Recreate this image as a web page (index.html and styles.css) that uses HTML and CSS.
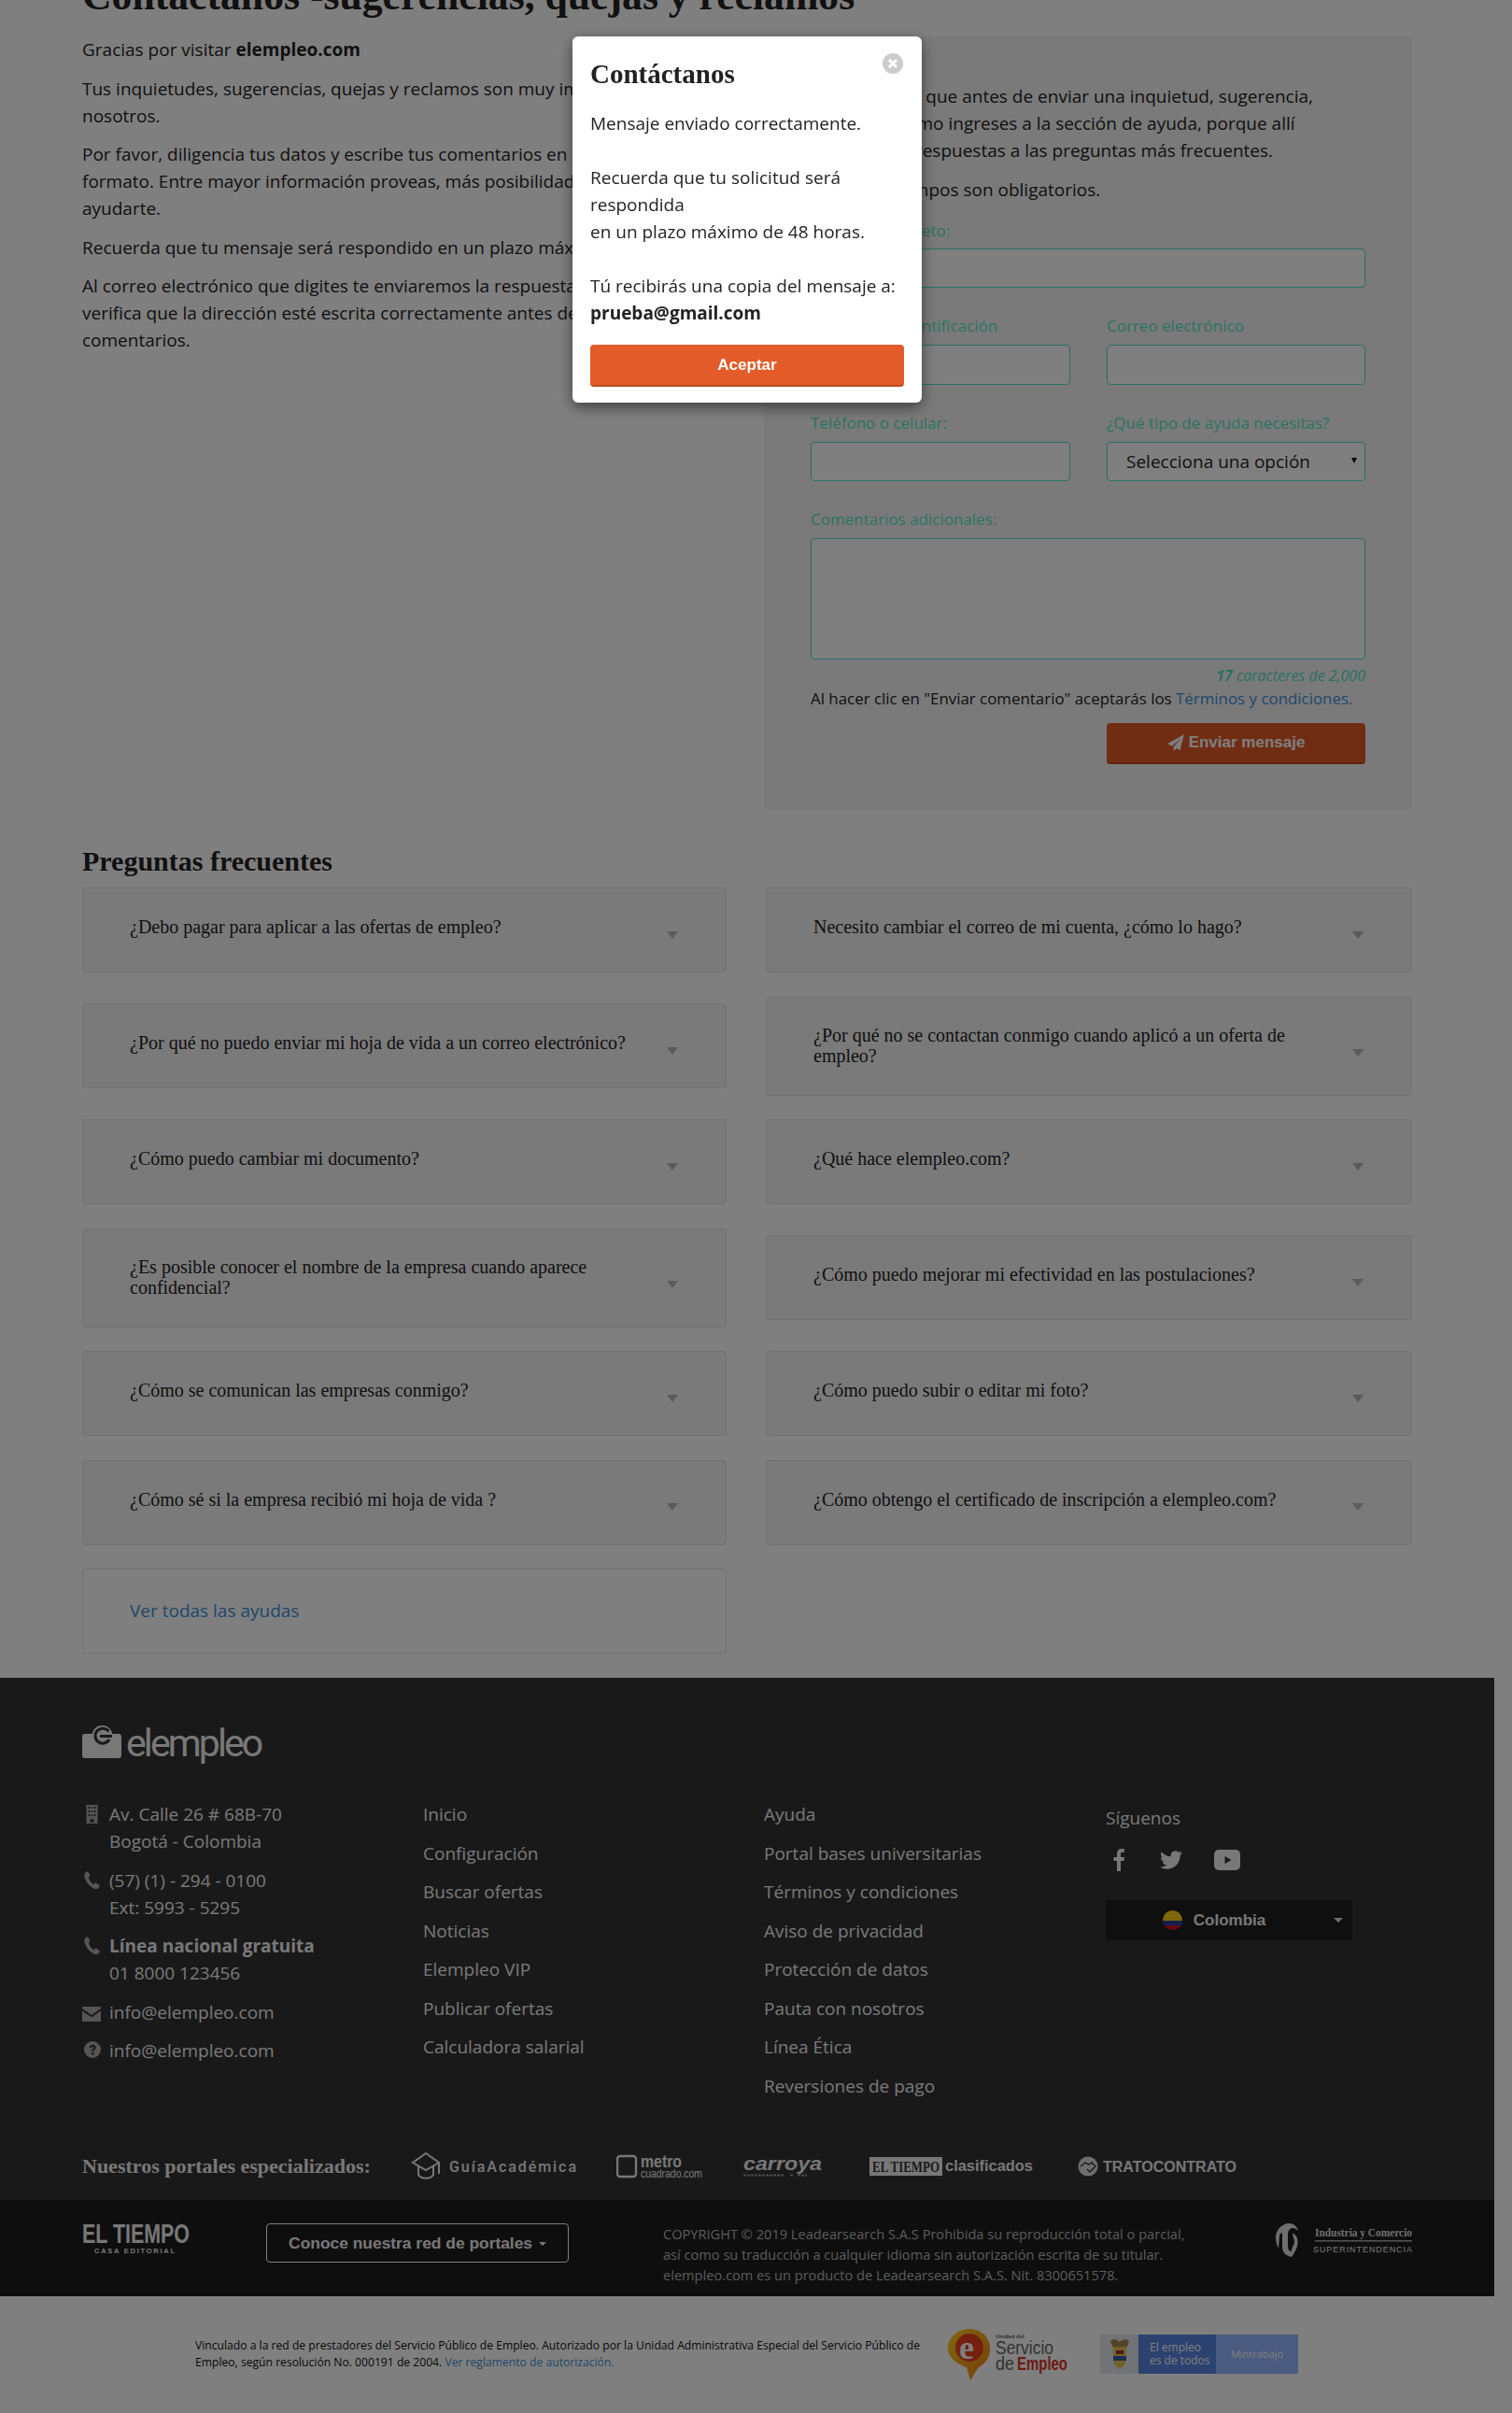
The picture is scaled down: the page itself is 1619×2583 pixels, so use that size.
FILE: index.html
```html
<!DOCTYPE html>
<html lang="es">
<head>
  <meta charset="UTF-8">
  <title>Contáctanos - elempleo.com</title>
  <link rel="stylesheet" href="styles.css">
</head>
<body>
  <div class="page">
    <main class="main">
      <h1 class="page-title">Contáctanos -sugerencias, quejas y reclamos</h1>

      <div class="contact">
        <div class="intro">
          <p>Gracias por visitar <b>elempleo.com</b></p>
          <p>Tus inquietudes, sugerencias, quejas y reclamos son muy importantes para<br>nosotros.</p>
          <p>Por favor, diligencia tus datos y escribe tus comentarios en el siguiente<br>formato. Entre mayor información proveas, más posibilidades tendremos de<br>ayudarte.</p>
          <p>Recuerda que tu mensaje será respondido en un plazo máximo de 48 horas.</p>
          <p>Al correo electrónico que digites te enviaremos la respuesta, por favor<br>verifica que la dirección esté escrita correctamente antes de enviar tus<br>comentarios.</p>
        </div>

        <form class="form-card">
          <p class="form-note">Te sugerimos que antes de enviar una inquietud, sugerencia,<br>queja o reclamo ingreses a la sección de ayuda, porque allí<br>encontrarás respuestas a las preguntas más frecuentes.</p>
          <p class="form-note">Todos los campos son obligatorios.</p>

          <div class="field field-first">
            <label>Nombre completo:</label>
            <input type="text">
          </div>
          <div class="field-row field-row-first">
            <div class="field">
              <label>Número de identificación</label>
              <input type="text">
            </div>
            <div class="field">
              <label>Correo electrónico</label>
              <input type="text">
            </div>
          </div>
          <div class="field-row">
            <div class="field">
              <label>Teléfono o celular:</label>
              <input type="text">
            </div>
            <div class="field">
              <label>¿Qué tipo de ayuda necesitas?</label>
              <div class="select-wrap">
                <select><option>Selecciona una opción</option></select>
              </div>
            </div>
          </div>
          <div class="field">
            <label>Comentarios adicionales:</label>
            <textarea></textarea>
          </div>
          <div class="char-count"><b>17</b> caracteres de 2,000</div>
          <p class="terms">Al hacer clic en "Enviar comentario" aceptarás los <a href="#">Términos y condiciones.</a></p>
          <div class="form-actions">
            <button type="button" class="btn-orange btn-send">
              <svg viewBox="0 0 16 16" width="18" height="18"><path d="M16 0 0 9l4.500 2L13 3.500 6 12v4l2.600-2.700L12 15z" fill="currentColor"/></svg>
              Enviar mensaje
            </button>
          </div>
        </form>
      </div>

      <h2 class="faq-title">Preguntas frecuentes</h2>
      <div class="faq-grid">
        <a class="faq-item"><span>¿Debo pagar para aplicar a las ofertas de empleo?</span><i class="faq-arrow"></i></a>
        <a class="faq-item"><span>Necesito cambiar el correo de mi cuenta, ¿cómo lo hago?</span><i class="faq-arrow"></i></a>
        <a class="faq-item"><span>¿Por qué no puedo enviar mi hoja de vida a un correo electrónico?</span><i class="faq-arrow"></i></a>
        <a class="faq-item faq-tall"><span>¿Por qué no se contactan conmigo cuando aplicó a un oferta de empleo?</span><i class="faq-arrow"></i></a>
        <a class="faq-item"><span>¿Cómo puedo cambiar mi documento?</span><i class="faq-arrow"></i></a>
        <a class="faq-item"><span>¿Qué hace elempleo.com?</span><i class="faq-arrow"></i></a>
        <a class="faq-item faq-tall"><span>¿Es posible conocer el nombre de la empresa cuando aparece confidencial?</span><i class="faq-arrow"></i></a>
        <a class="faq-item"><span>¿Cómo puedo mejorar mi efectividad en las postulaciones?</span><i class="faq-arrow"></i></a>
        <a class="faq-item"><span>¿Cómo se comunican las empresas conmigo?</span><i class="faq-arrow"></i></a>
        <a class="faq-item"><span>¿Cómo puedo subir o editar mi foto?</span><i class="faq-arrow"></i></a>
        <a class="faq-item"><span>¿Cómo sé si la empresa recibió mi hoja de vida ?</span><i class="faq-arrow"></i></a>
        <a class="faq-item"><span>¿Cómo obtengo el certificado de inscripción a elempleo.com?</span><i class="faq-arrow"></i></a>
        <a class="faq-all" href="#">Ver todas las ayudas</a>
      </div>
    </main>

    <footer class="footer">
      <div class="footer-logo">
        <svg viewBox="0 0 42 35" width="42" height="35">
          <circle cx="21.500" cy="11" r="11" fill="#f0f0f0"/>
          <rect y="9" width="42" height="26" rx="3" fill="#f0f0f0"/>
          <path d="M28.500 6.500A8 8 0 1 0 29 15" fill="none" stroke="#333" stroke-width="3"/>
          <path d="M19 11.500h13" fill="none" stroke="#333" stroke-width="3"/>
        </svg>
        <span class="logo-word">elempleo</span>
      </div>

      <div class="footer-cols">
        <div>
          <div class="contact-line">
            <span class="ico"><svg viewBox="0 0 18 30" width="17" height="20"><path fill-rule="evenodd" d="M0 0h18v30H0zm3 3v3h3V3zm5 0v3h2V3zm4 0v3h3V3zM3 9v3h3V9zm5 0v3h2V9zm4 0v3h3V9zM3 15v3h3v-3zm5 0v3h2v-3zm4 0v3h3v-3zM6 23v5h6v-5z"/></svg></span>
            <div>Av. Calle 26 # 68B-70<br>Bogotá - Colombia</div>
          </div>
          <div class="contact-line">
            <span class="ico"><svg viewBox="0 0 18 20" width="17" height="19"><path d="M4 0 1 2c-1 1-1 3 0 6 2 6 6 10 11 12 2 .500 4 0 5-2l1-2-5-3-2 2c-3-2-5-5-6-8l2-2z"/></svg></span>
            <div>(57) (1) - 294 - 0100<br>Ext: 5993 - 5295</div>
          </div>
          <div class="contact-line">
            <span class="ico"><svg viewBox="0 0 18 20" width="17" height="19"><path d="M4 0 1 2c-1 1-1 3 0 6 2 6 6 10 11 12 2 .500 4 0 5-2l1-2-5-3-2 2c-3-2-5-5-6-8l2-2z"/></svg></span>
            <div><b>Línea nacional gratuita</b><br>01 8000 123456</div>
          </div>
          <div class="contact-line">
            <span class="ico ico-mail"><svg viewBox="0 0 20 16" width="20" height="16"><path d="M1 0h18a1 1 0 0 1 1 1v1l-10 7L0 2V1a1 1 0 0 1 1-1zM0 4.500l10 7 10-7V15a1 1 0 0 1-1 1H1a1 1 0 0 1-1-1z"/></svg></span>
            <div>info@elempleo.com</div>
          </div>
          <div class="contact-line">
            <span class="ico"><svg viewBox="0 0 18 18" width="18" height="18"><path fill-rule="evenodd" d="M9 0a9 9 0 1 1 0 18A9 9 0 0 1 9 0zM8 12v2.500h2.500V12zM5.500 6.500 7.500 7.500c.3-1 .8-1.500 1.600-1.500.7 0 1.200.4 1.200 1 0 1.400-2.300 1.400-2.300 3.800h2.400c0-1.600 2.400-1.900 2.400-4 0-1.900-1.600-3-3.600-3-1.900 0-3.200 1-3.700 2.700z"/></svg></span>
            <div>info@elempleo.com</div>
          </div>
        </div>

        <ul class="footer-links">
          <li>Inicio</li>
          <li>Configuración</li>
          <li>Buscar ofertas</li>
          <li>Noticias</li>
          <li>Elempleo VIP</li>
          <li>Publicar ofertas</li>
          <li>Calculadora salarial</li>
        </ul>

        <ul class="footer-links">
          <li>Ayuda</li>
          <li>Portal bases universitarias</li>
          <li>Términos y condiciones</li>
          <li>Aviso de privacidad</li>
          <li>Protección de datos</li>
          <li>Pauta con nosotros</li>
          <li>Línea Ética</li>
          <li>Reversiones de pago</li>
        </ul>

        <div class="follow">
          <div>Síguenos</div>
          <div class="social">
            <svg viewBox="0 0 24 24" width="24" height="24" class="soc-fb"><path d="M14 9h4l-.5 4H14v11h-4V13H6.500V9H10V5.500C10 2 12 0 15 0c1.300 0 2.500.1 3 .2v3.600h-2c-1.500 0-2 .6-2 2z"/></svg>
            <svg viewBox="0 0 24 24" width="24" height="24" class="soc-tw"><path d="M23.950 4.570a10 10 0 0 1-2.820.77 4.960 4.960 0 0 0 2.160-2.720c-.95.55-2 .95-3.120 1.180a4.920 4.920 0 0 0-8.380 4.480C7.690 8.100 4.070 6.130 1.640 3.160a4.820 4.820 0 0 0-.67 2.480c0 1.710.87 3.200 2.180 4.080a4.900 4.900 0 0 1-2.230-.62v.06c0 2.390 1.700 4.380 3.950 4.830a5 5 0 0 1-2.210.08 4.940 4.940 0 0 0 4.600 3.420 9.870 9.870 0 0 1-6.100 2.100c-.39 0-.78-.02-1.170-.07a13.990 13.990 0 0 0 7.560 2.210c9.050 0 14-7.500 14-13.980 0-.21 0-.42-.02-.63a9.940 9.940 0 0 0 2.460-2.550z"/></svg>
            <svg viewBox="0 0 28 24" width="28" height="24"><path fill-rule="evenodd" d="M5 1h18a5 5 0 0 1 5 5v12a5 5 0 0 1-5 5H5a5 5 0 0 1-5-5V6a5 5 0 0 1 5-5zm6.500 7v8l7-4z"/></svg>
          </div>
          <div class="country">
            <span class="country-name">
              <svg viewBox="0 0 21 21" width="21" height="21"><defs><clipPath id="flag-clip"><circle cx="10.500" cy="10.500" r="10.500"/></clipPath></defs><g clip-path="url(#flag-clip)"><rect width="21" height="11" fill="#fcd116"/><rect y="11" width="21" height="5" fill="#2a3f9c"/><rect y="16" width="21" height="5" fill="#ce1126"/></g></svg>
              Colombia
            </span>
            <span class="country-caret"><i></i></span>
          </div>
        </div>
      </div>

      <div class="portals">
        <span class="portals-title">Nuestros portales especializados:</span>
        <div class="portal-logos">
          <svg class="logo-guia" viewBox="0 0 178 34" width="178" height="34">
            <g fill="none" stroke="#eee" stroke-width="2"><path d="M16 3 2 13l14 8 14-8z"/><path d="M8 17v9c3 5 13 5 16 0v-9"/><path d="M30 13v12"/></g>
            <text x="41" y="23" class="logo-round" textLength="136" font-size="16">GuíaAcadémica</text>
          </svg>
          <svg class="logo-metro" viewBox="0 0 94 30" width="94" height="30">
            <rect x="1" y="4" width="20" height="22" rx="3" fill="none" stroke="#eee" stroke-width="2.400"/>
            <text x="26" y="16" class="logo-text" textLength="44" lengthAdjust="spacingAndGlyphs" font-size="18" font-weight="700">metro</text>
            <text x="26" y="27" class="logo-text" textLength="66" lengthAdjust="spacingAndGlyphs" font-size="12">cuadrado.com</text>
          </svg>
          <svg class="logo-carroya" viewBox="0 0 86 30" width="86" height="30">
            <text x="0" y="19" class="logo-text" textLength="84" lengthAdjust="spacingAndGlyphs" font-size="21" font-weight="700" font-style="italic">carroya</text>
            <path d="M0 24.500h44m6 0h3m5 0h10" stroke="#999" stroke-width="2" stroke-dasharray="3 1"/>
          </svg>
          <svg class="logo-clasif" viewBox="0 0 175 24" width="175" height="24">
            <rect x="0" y="2" width="78" height="20" fill="#eee"/>
            <text x="3" y="18" class="logo-serif logo-text-dark" textLength="72" lengthAdjust="spacingAndGlyphs" font-size="17" font-weight="700">EL TIEMPO</text>
            <text x="81" y="17" class="logo-text" textLength="94" lengthAdjust="spacingAndGlyphs" font-size="16" font-weight="700">clasificados</text>
          </svg>
          <svg class="logo-trato" viewBox="0 0 170 24" width="170" height="24">
            <circle cx="11" cy="12" r="10.500" fill="#ddd"/>
            <path d="M3 12l5-4 4 2 3-2 4 4-6 6-3-3" fill="none" stroke="#333" stroke-width="1.400"/>
            <text x="27" y="18" class="logo-text" textLength="143" lengthAdjust="spacingAndGlyphs" font-size="16" font-weight="700">TRATOCONTRATO</text>
          </svg>
        </div>
      </div>

      <div class="footer-bar">
        <svg class="logo-tiempo" viewBox="0 0 115 34" width="115" height="34">
          <text x="0" y="21" class="logo-text logo-narrow" textLength="115" lengthAdjust="spacingAndGlyphs" font-size="29" font-weight="700">EL TIEMPO</text>
          <text x="13" y="32" class="logo-text" textLength="86" font-size="7.500" font-weight="700">CASA EDITORIAL</text>
        </svg>
        <button type="button" class="network-btn">Conoce nuestra red de portales <i></i></button>
        <p class="copyright">COPYRIGHT © 2019 Leadearsearch S.A.S Prohibida su reproducción total o parcial,<br>así como su traducción a cualquier idioma sin autorización escrita de su titular.<br>elempleo.com es un producto de Leadearsearch S.A.S. Nit. 8300651578.</p>
        <svg class="logo-sic" viewBox="0 0 146 36" width="146" height="36">
          <path d="M14 0c5 0 9 3 10 8-2-2-4-3-6-3-3 0-5 3-5 8v11c0 3 1 6 4 6 0-5 3-7 3-10 0-4-2-6-2-9 2 0 4 2 5 5 2 6-1 13-6 20C9 34 7 30 7 24V12C7 9 5 10 4 13L3 27C1 23 0 19 0 15 0 7 7 0 14 0z" fill="#ddd"/>
          <text x="42" y="14" class="logo-serif" textLength="104" lengthAdjust="spacingAndGlyphs" font-size="12" font-weight="700">Industria y Comercio</text>
          <rect x="42" y="18" width="104" height="1.500" fill="#aaa"/>
          <text x="40" y="31" class="logo-text" textLength="106" font-size="9">SUPERINTENDENCIA</text>
        </svg>
      </div>
    </footer>

    <div class="legal">
      <p class="legal-text">Vinculado a la red de prestadores del Servicio Público de Empleo. Autorizado por la Unidad Administrativa Especial del Servicio Público de<br>Empleo, según resolución No. 000191 de 2004. <a href="#">Ver reglamento de autorización.</a></p>
      <svg class="logo-spe" viewBox="0 0 130 55" width="130" height="55">
        <defs><linearGradient id="spe-grad" x1="0" y1="0" x2="1" y2="1"><stop offset="0" stop-color="#ffd21f"/><stop offset="1" stop-color="#f07a12"/></linearGradient></defs>
        <path d="M25 0c13 0 22 9 22 21 0 10-5 16-13 21l-8 13-4-14C10 37 2 30 2 21 2 9 12 0 25 0z" fill="url(#spe-grad)"/>
        <circle cx="25" cy="20" r="15" fill="#e8401c"/>
        <text x="14" y="32" class="logo-white" font-size="36" font-weight="700">e</text>
        <text x="53" y="10" class="spe-small" font-size="6" font-weight="700">Unidad del</text>
        <text x="53" y="27" class="spe-word" textLength="62" lengthAdjust="spacingAndGlyphs" font-size="20">Servicio</text>
        <text x="53" y="44" class="spe-word" font-size="20" textLength="20" lengthAdjust="spacingAndGlyphs">de</text>
        <text x="76" y="44" class="spe-red" font-size="20" textLength="54" lengthAdjust="spacingAndGlyphs">Empleo</text>
      </svg>
      <div class="mintrabajo">
        <div class="min-shield">
          <svg viewBox="0 0 24 36" width="24" height="36"><path d="M2 4c3-3 7-2 10 1 3-3 7-4 10-1l-2 6H4z" fill="#a5894f"/><path d="M5 10h14v14c0 5-4 8-7 10-3-2-7-5-7-10z" fill="#e1c25a"/><path d="M5 20h14v5H5z" fill="#3b5da0"/><path d="M8 14h8v4H8z" fill="#9c2b2b"/></svg>
        </div>
        <div class="min-blue">El empleo<br>es de todos</div>
        <div class="min-light">Mintrabajo</div>
      </div>
    </div>
  </div>

  <div class="overlay">
    <div class="modal">
      <svg class="modal-close" viewBox="0 0 22 22" width="22" height="22"><circle cx="11" cy="11" r="11" fill="#ccc"/><path d="m7 7 8 8m0-8-8 8" stroke="#fff" stroke-width="3"/></svg>
      <h3 class="modal-title">Contáctanos</h3>
      <p class="modal-text">Mensaje enviado correctamente.<br><br>Recuerda que tu solicitud será<br>respondida<br>en un plazo máximo de 48 horas.<br><br>Tú recibirás una copia del mensaje a:<br><b>prueba@gmail.com</b></p>
      <button type="button" class="btn-orange btn-accept">Aceptar</button>
    </div>
  </div>
</body>
</html>
```

FILE: styles.css
```css
* {
  box-sizing: border-box;
}

body {
  margin: 0;
  background: #fff;
  color: #222;
  font-family: "Open Sans", "Noto Sans", sans-serif;
  font-size: 19px;
  line-height: 29px;
}

p {
  margin: 0;
}

a {
  color: #3f8fd6;
  text-decoration: none;
}

.page {
  width: 1600px;
  overflow: hidden;
}

.main {
  padding: 0 88px;
}

.page-title {
  margin: -25px 0 24px;
  font-family: "Liberation Serif", serif;
  font-size: 43.700px;
  line-height: 40px;
  font-weight: 700;
  white-space: nowrap;
}

.contact {
  display: grid;
  grid-template-columns: 690px 694px;
  column-gap: 40px;
}

.intro p {
  margin-bottom: 12.500px;
  white-space: nowrap;
}

/* form card */
.form-card {
  height: 828px;
  padding: 50px 50px 0;
  background: #f5f5f5;
  border-radius: 4px;
}

.form-note {
  margin-bottom: 12.500px;
  white-space: nowrap;
}

.field {
  margin-bottom: 31px;
}

.field-first {
  margin-top: 19px;
}

.field label {
  display: block;
  height: 20px;
  margin-bottom: 10px;
  color: #56e6c8;
  font-size: 17px;
  line-height: 20px;
}

.field-first label {
  margin-bottom: 9px;
}

.field input,
.field select,
.field textarea {
  display: block;
  width: 100%;
  height: 42px;
  padding: 0 20px;
  background: #fff;
  border: 1px solid #56e0c4;
  border-radius: 4px;
  color: #222;
  font-family: inherit;
  font-size: 19px;
  appearance: none;
}

.field-row-first input {
  height: 43px;
}

.field textarea {
  height: 130px;
  resize: none;
}

.field-row {
  display: grid;
  grid-template-columns: 278px 277px;
  column-gap: 39px;
}

.select-wrap {
  position: relative;
}

.select-wrap::after {
  content: "";
  position: absolute;
  right: 9px;
  top: 17px;
  border-top: 6px solid #111;
  border-left: 3px solid transparent;
  border-right: 3px solid transparent;
}

.char-count {
  margin-top: -23px;
  color: #56e0c4;
  font-size: 16px;
  font-style: italic;
  line-height: 18px;
  text-align: right;
}

.terms {
  margin-top: 6px;
  font-size: 16.900px;
  line-height: 20px;
  white-space: nowrap;
}

.form-actions {
  display: flex;
  justify-content: flex-end;
  margin-top: 16px;
}

.btn-orange {
  display: block;
  background: #e25b28;
  border: 0;
  border-bottom: 2px solid #bf4a1e;
  border-radius: 4px;
  color: #fff;
  font-family: "Liberation Sans", sans-serif;
  font-weight: 700;
}

.btn-send {
  display: flex;
  align-items: center;
  justify-content: center;
  gap: 5px;
  width: 277px;
  height: 44px;
  font-size: 17px;
}

/* preguntas frecuentes */
.faq-title {
  margin: 35px 0 8px;
  font-family: "Liberation Serif", serif;
  font-size: 30px;
  line-height: 40px;
  font-weight: 700;
}

.faq-grid {
  display: grid;
  grid-template-columns: 690px 692px;
  column-gap: 42px;
  row-gap: 25.500px;
  align-items: center;
}

.faq-item {
  display: flex;
  align-items: center;
  justify-content: space-between;
  height: 91px;
  padding: 0 51px 5px 50px;
  background: #f5f5f5;
  border: 1px solid #e0e0e0;
  border-radius: 4px;
  color: #222;
  font-family: "Liberation Serif", serif;
  font-size: 20px;
  line-height: 21.500px;
}

.faq-tall {
  height: 106px;
  padding-bottom: 0;
}

.faq-item span {
  max-width: 550px;
}

.faq-arrow {
  flex: none;
  margin-top: 15px;
  border-top: 8px solid #b4b4b4;
  border-left: 6.500px solid transparent;
  border-right: 6.500px solid transparent;
}

.faq-all {
  display: flex;
  align-items: center;
  height: 91px;
  padding-left: 50px;
  background: #fff;
  border: 1px solid #e0e0e0;
  border-radius: 4px;
}

/* footer */
.footer {
  margin-top: 26px;
  padding-top: 51px;
  background: #333;
  color: #f0f0f0;
}

.footer-logo {
  display: flex;
  align-items: flex-start;
  gap: 5px;
  height: 43px;
  padding-left: 88px;
}

.logo-word {
  margin-top: -5px;
  font-family: Roboto, sans-serif;
  font-size: 41px;
  line-height: 48px;
  letter-spacing: -2.900px;
}

.footer-cols {
  display: grid;
  grid-template-columns: 365px 365px 366px auto;
  padding: 38px 0 0 88px;
}

.contact-line {
  display: flex;
  margin-bottom: 12.500px;
  white-space: nowrap;
}

.ico {
  flex: none;
  width: 29px;
  padding: 4px 0 0 2px;
  fill: #aaa;
  line-height: 0;
}

.ico-mail {
  padding-left: 0;
  padding-top: 8px;
}

.footer-links {
  margin: 0;
  padding: 0;
  list-style: none;
}

.footer-links li {
  margin-bottom: 12.500px;
}

.follow {
  padding-top: 4px;
}

.social {
  display: flex;
  align-items: center;
  margin-top: 18px;
  fill: #f0f0f0;
}

.soc-fb {
  margin: 0 32px 0 2px;
}

.soc-tw {
  margin-right: 34px;
}

.country {
  display: flex;
  width: 264px;
  height: 43px;
  margin-top: 31px;
  background: #1f1f1f;
  border-radius: 4px;
  font-family: "Liberation Sans", sans-serif;
  font-size: 17px;
  font-weight: 700;
}

.country-name {
  display: flex;
  align-items: center;
  justify-content: center;
  gap: 12px;
  width: 232px;
}

.country-caret {
  display: flex;
  align-items: center;
  justify-content: center;
  flex: 1;
  border-left: 1px solid #222;
}

.country-caret i {
  border-top: 5px solid #ddd;
  border-left: 5px solid transparent;
  border-right: 5px solid transparent;
}

.portals {
  display: flex;
  align-items: center;
  height: 40px;
  margin-top: 38px;
  padding-left: 88px;
}

.portals-title {
  width: 352px;
  font-family: "Liberation Serif", serif;
  font-size: 22px;
  font-weight: 700;
}

.portal-logos {
  display: flex;
  align-items: center;
  margin-top: 2px;
}

.logo-text {
  fill: #eee;
  font-family: "Liberation Sans", sans-serif;
}

.logo-round {
  fill: #eee;
  font-family: Roboto, sans-serif;
  font-weight: 500;
}

.logo-narrow {
  font-family: "Liberation Sans Narrow", "Liberation Sans", sans-serif;
}

.logo-serif {
  fill: #ddd;
  font-family: "Liberation Serif", serif;
}

.logo-text-dark {
  fill: #333;
}

.logo-white {
  fill: #fff;
  font-family: "Liberation Serif", serif;
}

.logo-guia {
  margin-right: 42px;
}

.logo-metro {
  margin-right: 42px;
}

.logo-carroya {
  margin-right: 49px;
}

.logo-clasif {
  margin-right: 48px;
}

.footer-bar {
  display: flex;
  align-items: flex-start;
  height: 103px;
  margin-top: 17px;
  padding: 25px 0 0 88px;
  background: #1c1c1c;
}

.logo-tiempo {
  flex: none;
  margin-right: 82px;
}

.network-btn {
  flex: none;
  width: 324px;
  height: 42px;
  margin-right: 101px;
  background: transparent;
  border: 1px solid #fff;
  border-radius: 4px;
  color: #f0f0f0;
  font-family: "Liberation Sans", sans-serif;
  font-size: 17.400px;
  font-weight: 700;
}

.network-btn i {
  display: inline-block;
  margin: 0 0 3px 2px;
  border-top: 4px solid #f0f0f0;
  border-left: 4px solid transparent;
  border-right: 4px solid transparent;
}

.copyright {
  flex: none;
  width: 656px;
  color: #b8b8b8;
  font-size: 14.600px;
  line-height: 22px;
  white-space: nowrap;
}

.logo-sic {
  flex: none;
}

/* vinculado */
.legal {
  display: flex;
  align-items: center;
  height: 124px;
  padding-left: 209px;
}

.legal-text {
  flex: none;
  width: 804px;
  color: #111;
  font-size: 12.150px;
  line-height: 18px;
  white-space: nowrap;
}

.logo-spe {
  flex: none;
  margin-right: 35px;
}

.spe-small,
.spe-word {
  fill: #666;
  font-family: "Liberation Sans", sans-serif;
}

.spe-red {
  fill: #d8342a;
  font-family: "Liberation Sans", sans-serif;
  font-weight: 700;
}

.mintrabajo {
  display: flex;
  width: 212px;
  height: 42px;
  color: #fff;
  font-size: 12px;
  line-height: 14px;
}

.min-shield {
  display: flex;
  align-items: center;
  justify-content: center;
  width: 41px;
  background: #e4e7ee;
}

.min-blue {
  display: flex;
  align-items: center;
  width: 83px;
  padding-left: 12px;
  background: #5884e0;
}

.min-light {
  display: flex;
  align-items: center;
  justify-content: center;
  flex: 1;
  background: #94b6ff;
  font-size: 11px;
}

/* mensaje enviado */
.overlay {
  position: fixed;
  inset: 0;
  display: flex;
  justify-content: center;
  align-items: flex-start;
  padding: 39px 19px 0 0;
  background: rgba(0, 0, 0, 0.5);
}

.modal {
  position: relative;
  width: 374px;
  height: 392px;
  padding: 0 19px;
  background: #fff;
  border-radius: 6px;
  box-shadow: 0 5px 15px rgba(0, 0, 0, 0.5);
}

.modal-close {
  position: absolute;
  top: 18px;
  right: 20px;
}

.modal-title {
  margin: 0;
  padding-top: 22px;
  font-family: "Liberation Serif", serif;
  font-size: 29px;
  line-height: 36px;
  font-weight: 700;
}

.modal-text {
  margin-top: 21px;
  width: 336px;
  white-space: nowrap;
}

.btn-accept {
  width: 336px;
  height: 45px;
  margin-top: 19px;
  font-size: 17px;
}
```
